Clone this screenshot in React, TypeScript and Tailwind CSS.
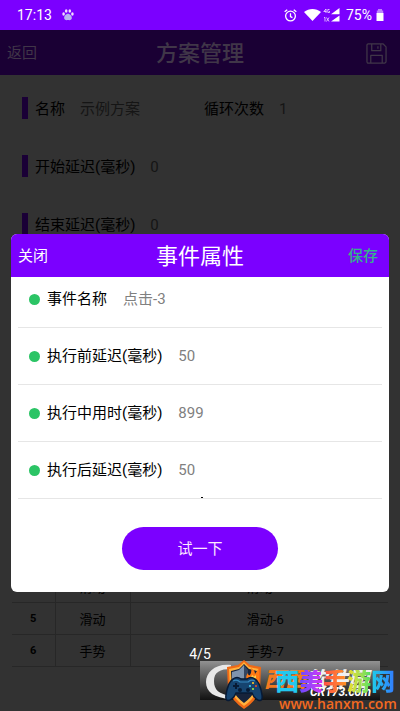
import React from "react";

const FIELDS = [
  { id: "event-name", label: "事件名称", value: "点击-3" },
  { id: "before", label: "执行前延迟(毫秒)", value: "50" },
  { id: "during", label: "执行中用时(毫秒)", value: "899" },
  { id: "after", label: "执行后延迟(毫秒)", value: "50" },
];

const ROWS = [
  { no: 4, type: "滑动", name: "滑动-5" },
  { no: 5, type: "滑动", name: "滑动-6" },
  { no: 6, type: "手势", name: "手势-7" },
];

function StatusBar() {
  return (
    <div className="flex h-[30px] items-center bg-[#7b00ff] pr-4 pl-[17px] text-white">
      <span className="text-sm">17:13</span>
      <svg className="ml-2.5 h-3 w-3" viewBox="0 0 12 12" fill="#f3ddff">
        <ellipse cx="1.6" cy="5" rx="1.3" ry="1.7" />
        <ellipse cx="4.2" cy="2" rx="1.3" ry="1.8" />
        <ellipse cx="7.8" cy="2" rx="1.3" ry="1.8" />
        <ellipse cx="10.4" cy="5" rx="1.3" ry="1.7" />
        <path d="M6 4.800c2 0 4.300 2.400 3.800 4.800-.6 2-2.500 1.500-3.800 1.500S2.800 11.600 2.200 9.600C1.700 7.200 4 4.800 6 4.800z" fill="#b9b5f0" />
      </svg>
      <div className="ml-auto flex items-center">
        <svg className="h-[13px] w-[13px]" viewBox="0 0 12 12" fill="none" stroke="#fff" strokeWidth="1.200">
          <circle cx="6" cy="6.500" r="4.500" />
          <path d="M6 4v3l1.800 1M.6 2.600 3 .6M11.400 2.600 9 .6" />
        </svg>
        <svg className="ml-[7px] h-3 w-[17px]" viewBox="0 0 17 12" fill="#fff">
          <path d="M0 3C5-1 12-1 17 3L8.500 12z" />
        </svg>
        <svg className="ml-0.5 h-[14px] w-[17px]" viewBox="0 0 17 14" fill="#fff">
          <path d="M16.500 0v6.200H8zM16.500 7.500v6H8z" />
          <path d="M3 1 .8 3.500h2.700M3 1v4M6.500 1.500H4.800v3h1.700V3M1 9.500h1v4M3.500 9.500l2.500 4M6 9.500l-2.500 4" fill="none" stroke="#f3ddff" strokeWidth=".8" />
        </svg>
        <span className="ml-1.5 text-sm">75%</span>
        <svg className="ml-1 h-3 w-2" viewBox="0 0 8 12" fill="#fff">
          <path d="M2 0h4v1.500h1.200v2.500H.8V1.500H2z" opacity=".5" />
          <path d="M.5 4h7v8h-7z" />
        </svg>
      </div>
    </div>
  );
}

function PageField({ id, label, value, bar }: { id: string; label: string; value: string; bar: boolean }) {
  return (
    <div className="flex h-[58px] items-center">
      {bar && <span className="mr-[7px] h-[22px] w-1.5 bg-[#1a0036]" />}
      <label htmlFor={id} className="pt-0.5 whitespace-nowrap text-black">{label}</label>
      <input id={id} defaultValue={value} className="ml-[15px] w-20 min-w-0 bg-transparent pt-0.5 text-[#151515] outline-none" />
    </div>
  );
}

function SchemePage() {
  return (
    <div className="flex flex-1 flex-col bg-[#323232]">
      <header className="grid h-[45px] grid-cols-3 items-center bg-[#1a0034] px-[7px] pt-0.5 text-[#403648]">
        <button className="justify-self-start text-[15px]">返回</button>
        <h1 className="text-center text-[22px] font-medium whitespace-nowrap">方案管理</h1>
        <button aria-label="保存方案" className="mr-1.5 justify-self-end">
          <svg className="h-[21px] w-[21px]" viewBox="0 0 22 22" fill="none" stroke="currentColor" strokeWidth="1.300" strokeLinejoin="round">
            <path d="M1 2.500Q1 1 2.500 1H18l3 3v15.500q0 1.500-1.500 1.500h-17Q1 21 1 19.500z" />
            <path d="M6 1v7h9.500V1M12.500 3.500v2.500M5 21v-8h12v8" />
          </svg>
        </button>
      </header>
      <section className="px-[22px] pt-1 text-[15px]">
        <div className="grid grid-cols-2 gap-x-2">
          <PageField id="scheme-name" label="名称" value="示例方案" bar />
          <PageField id="loops" label="循环次数" value="1" bar={false} />
        </div>
        <PageField id="start-delay" label="开始延迟(毫秒)" value="0" bar />
        <PageField id="end-delay" label="结束延迟(毫秒)" value="0" bar />
      </section>
      <table className="mx-3 mt-[317px] table-fixed border-collapse text-[13px] text-black">
        <colgroup>
          <col className="w-[43px]" />
          <col className="w-[75px]" />
          <col />
        </colgroup>
        <tbody>
          {ROWS.map((r) => (
            <tr key={r.no} className="h-8 border-y border-[#272727]">
              <th className="pt-0.5 text-[11px] font-bold">{r.no}</th>
              <td className="border-x border-[#272727] pt-0.5 text-center">{r.type}</td>
              <td className="pt-0.5 pl-3 text-center">{r.name}</td>
            </tr>
          ))}
        </tbody>
      </table>
    </div>
  );
}

function EventDialog() {
  return (
    <div role="dialog" aria-label="事件属性" className="absolute inset-x-[11px] top-[234px] overflow-hidden rounded-md bg-white">
      <header className="grid h-[43px] grid-cols-3 items-center bg-[#7b00ff] px-[7px] pt-0.5 text-[15px] text-white">
        <button className="justify-self-start">关闭</button>
        <h2 className="text-center text-[22px] whitespace-nowrap">事件属性</h2>
        <button className="mr-1 justify-self-end font-medium text-[#35b28c]">保存</button>
      </header>
      <div className="-mt-1.5 px-[7px]">
        {FIELDS.map((f) => (
          <div key={f.id} className="flex h-[57px] items-center border-b border-[#e6e6e6] pl-[11px] text-[15px]">
            <span className="mr-[7px] h-[11px] w-[11px] rounded-full bg-[#2bc465]" />
            <label htmlFor={f.id} className="whitespace-nowrap text-black">{f.label}</label>
            <input id={f.id} defaultValue={f.value} className="ml-4 w-24 min-w-0 bg-transparent text-[#808080] outline-none" />
          </div>
        ))}
      </div>
      <span className="mx-auto -mt-0.5 block h-px w-0.5 translate-x-0.5 bg-black" />
      <div className="flex justify-center pt-[29px] pb-[22px]">
        <button className="h-[43px] w-[156px] rounded-full bg-[#7b00ff] pt-0.5 text-[15px] text-[#ffe8ff]">试一下</button>
      </div>
    </div>
  );
}

function Shield() {
  return (
    <svg className="absolute top-0 left-[25px] h-[49px] w-[38px]" viewBox="0 0 38 49">
      <path d="M19 0 25 5 36 7 35 30Q31 41 19 49Q7 41 3 30L2 7 13 5z" fill="#f06a16" />
      <path d="M19 2 24 7 34 9 33 29Q29 39 19 46Q9 39 5 29L4 9 14 7z" fill="#ffb23e" />
      <path d="M19 4 24 9 32 11 31 29Q27 37 19 43Q11 37 7 29L6 11 14 9z" fill="#17233b" />
      <path d="M19 5v17H7V12l7-2z" fill="#7f94ad" />
      <path d="M19 5v17h4V10z" fill="#34455f" />
      <path d="M22 20q-2-4 1-7 0 3 2 2 2-3 1-7 4 2 4 6l4-6v13z" fill="#ff7a14" />
      <path d="M25 20q0-4 3-5 0 3 3 0v6z" fill="#ffd04c" />
      <path d="M8 19q4-3 8 0h6q4-3 8 0 5 3 7 16 1 7-4 5-4-2-6-7H11q-2 5-6 7-5 2-4-5 2-13 7-16z" fill="#164470" stroke="#071a35" strokeWidth="1.500" />
      <path d="M8 21q4-2 7 1h8q3-3 7-1" fill="none" stroke="#3687bd" strokeWidth="1.200" />
      <path d="M8 26h6M11 23v6" stroke="#071a35" strokeWidth="2" />
      <circle cx="28" cy="23" r="1.100" fill="#ffc928" />
      <circle cx="31" cy="26" r="1.100" fill="#f04b22" />
      <circle cx="25" cy="26" r="1.100" fill="#44c8ee" />
      <circle cx="28" cy="29" r="1.100" fill="#9ae64c" />
      <circle cx="15" cy="30" r="2" fill="#071a35" />
      <circle cx="23" cy="30" r="2" fill="#071a35" />
    </svg>
  );
}

function Watermark() {
  return (
    <div className="absolute right-0 bottom-0 h-[51px] w-[200px]">
      <div className="absolute top-px left-0 h-[39px] w-[180px] bg-linear-to-b from-[#929292] via-[#505050] to-[#121212]" />
      <svg className="absolute top-1 left-1.5 h-[35px] w-[26px]" viewBox="0 0 26 35" fill="#e8e8e8">
        <path d="M25 1C10-1 0 8 0 18s8 16 25 17v-3C13 30 8 26 8 17S14 5 25 5z" />
      </svg>
      <span className="absolute top-[8px] left-[64px] text-[21px] leading-6 font-black whitespace-nowrap text-[#f0f0f0] italic">
        <span className="text-[#f47a20]">西西</span>软件园
      </span>
      <span className="absolute top-[26px] left-[110px] text-[12px] leading-3 font-bold text-white italic">CR173.com</span>
      <Shield />
      <div className="absolute top-[10px] left-[75px] flex text-[24px] leading-6 font-black whitespace-nowrap">
        <span className="text-[#22c8ef]">西</span>
        <span className="bg-linear-to-r from-[#6547ff] to-[#d82af5] bg-clip-text text-transparent">美</span>
        <span className="bg-linear-to-r from-[#ff4b45] to-[#ff921f] bg-clip-text text-transparent">手</span>
        <span className="bg-linear-to-r from-[#f1dc22] to-[#45df62] bg-clip-text text-transparent">游</span>
        <span className="bg-linear-to-r from-[#21cfe7] to-[#3478ff] bg-clip-text text-transparent">网</span>
      </div>
      <span className="absolute top-[36px] left-[79px] font-['Open_Sans',sans-serif] text-[14px] leading-[15px] font-semibold text-[#f26a21]">www.hanxm.com</span>
    </div>
  );
}

export default function App() {
  return (
    <div className="relative flex min-h-screen flex-col overflow-hidden bg-[#323232] font-[Roboto,'Noto_Sans_CJK_SC',sans-serif]">
      <StatusBar />
      <SchemePage />
      <EventDialog />
      <span className="absolute inset-x-0 bottom-[47px] text-center text-sm leading-5 text-white">4/5</span>
      <Watermark />
    </div>
  );
}
